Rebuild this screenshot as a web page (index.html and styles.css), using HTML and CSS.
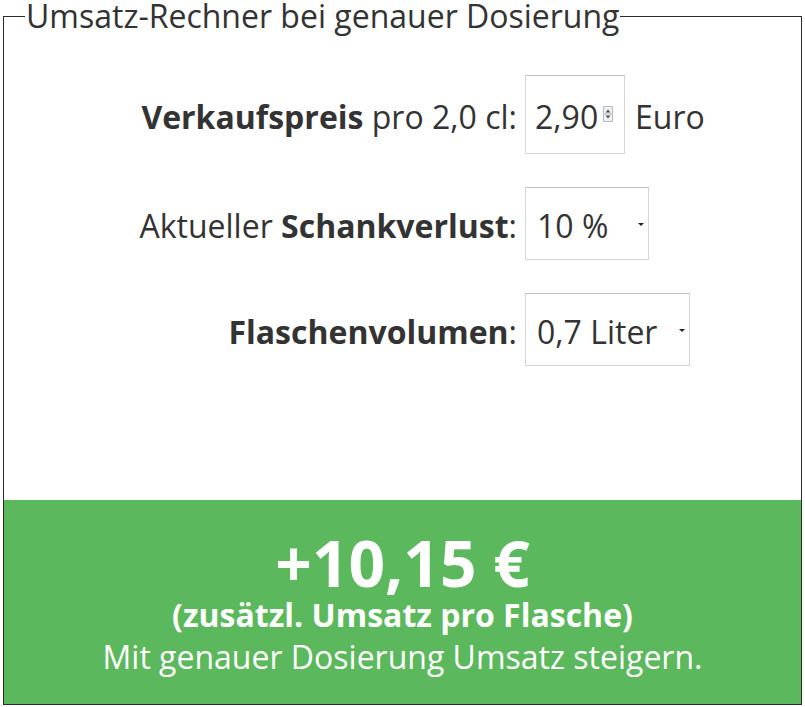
FILE: index.html
```html
<!DOCTYPE html>
<html lang="de">
<head>
<meta charset="utf-8">
<title>Umsatz-Rechner</title>
<link rel="stylesheet" href="styles.css">
</head>
<body>
<fieldset class="calc">
  <legend class="calc-legend">Umsatz-Rechner bei genauer Dosierung</legend>
  <div class="form-grid">
    <label class="lbl" for="preis"><b>Verkaufspreis</b> pro 2,0 cl:</label>
    <div class="field">
      <span class="num-wrap">
        <input id="preis" class="num" type="text" value="2,90">
        <svg class="spin" width="10" height="16" viewBox="0 0 10 16">
          <rect x="0.5" y="0.5" width="9" height="15" fill="#eef0f3" stroke="#b8bcc2"/>
          <line x1="1" y1="8" x2="9" y2="8" stroke="#b8bcc2"/>
          <path d="M2.5 6.5 L5 3.5 L7.5 6.5 Z" fill="#555"/>
          <path d="M2.5 9.5 L5 12.5 L7.5 9.5 Z" fill="#555"/>
        </svg>
      </span>
      <span class="unit">Euro</span>
    </div>

    <label class="lbl" for="verlust">Aktueller <b>Schankverlust</b>:</label>
    <div class="field">
      <span class="sel-wrap">
        <select id="verlust" class="sel sel-small"><option>10 %</option></select>
        <span class="caret"></span>
      </span>
    </div>

    <label class="lbl" for="volumen"><b>Flaschenvolumen</b>:</label>
    <div class="field">
      <span class="sel-wrap">
        <select id="volumen" class="sel sel-wide"><option>0,7 Liter</option></select>
        <span class="caret"></span>
      </span>
    </div>
  </div>

  <div class="result">
    <div class="result-amount">+10,15 €</div>
    <div class="result-sub">(zusätzl. Umsatz pro Flasche)</div>
    <div class="result-note">Mit genauer Dosierung Umsatz steigern.</div>
  </div>
</fieldset>
</body>
</html>
```

FILE: styles.css
```css
html, body {
  margin: 0;
  padding: 0;
  background: #fff;
}

body {
  font-family: "Open Sans", "DejaVu Sans", sans-serif;
  color: #333;
  padding: 0 3px 2px 3px;
}

.calc {
  margin: 0;
  padding: 0;
  border: 1px solid #2b2b2b;
  min-width: 0;
}

.calc-legend {
  margin-left: 21px;
  padding: 0 1px;
  font-size: 32px;
  line-height: 32px;
  color: #333;
}

.form-grid {
  display: grid;
  grid-template-columns: 513px auto;
  column-gap: 8px;
  row-gap: 33px;
  align-items: center;
  padding-top: 43px;
}

.lbl {
  justify-self: end;
  font-size: 32px;
  white-space: nowrap;
  padding-top: 4px;
}

.lbl b {
  font-weight: 700;
}

.field {
  display: flex;
  align-items: center;
  gap: 10px;
}

.num-wrap,
.sel-wrap {
  position: relative;
  display: inline-block;
}

.num {
  box-sizing: border-box;
  width: 100px;
  height: 79px;
  padding: 4px 0 0 9px;
  margin: 0;
  border: 1px solid #d6d6d6;
  border-top-color: #c2c2c2;
  font-family: inherit;
  font-size: 32px;
  color: #333;
  background: #fff;
  outline: none;
  display: block;
}

.spin {
  position: absolute;
  left: 78px;
  top: 31px;
}

.unit {
  font-size: 32px;
  padding-top: 4px;
}

.sel {
  -webkit-appearance: none;
  appearance: none;
  box-sizing: border-box;
  height: 73px;
  padding: 3px 0 0 11px;
  margin: 0;
  border: 1px solid #d6d6d6;
  border-top-color: #c2c2c2;
  border-radius: 0;
  font-family: inherit;
  font-size: 32px;
  color: #333;
  background: #fff;
  display: block;
  outline: none;
}

.sel-small {
  width: 124px;
}

.sel-wide {
  width: 165px;
}

.caret {
  position: absolute;
  right: 5px;
  top: 36px;
  width: 0;
  height: 0;
  border-left: 3px solid transparent;
  border-right: 3px solid transparent;
  border-top: 3px solid #222;
}

.result {
  margin-top: 134px;
  background: #5cb85c;
  color: #fff;
  text-align: center;
  height: 204px;
  box-sizing: border-box;
  padding-top: 31px;
}

.result-amount {
  font-size: 64px;
  font-weight: 700;
  line-height: 64px;
}

.result-sub {
  font-size: 32px;
  font-weight: 700;
  line-height: 40px;
}

.result-note {
  font-size: 32px;
  line-height: 44px;
}
```
